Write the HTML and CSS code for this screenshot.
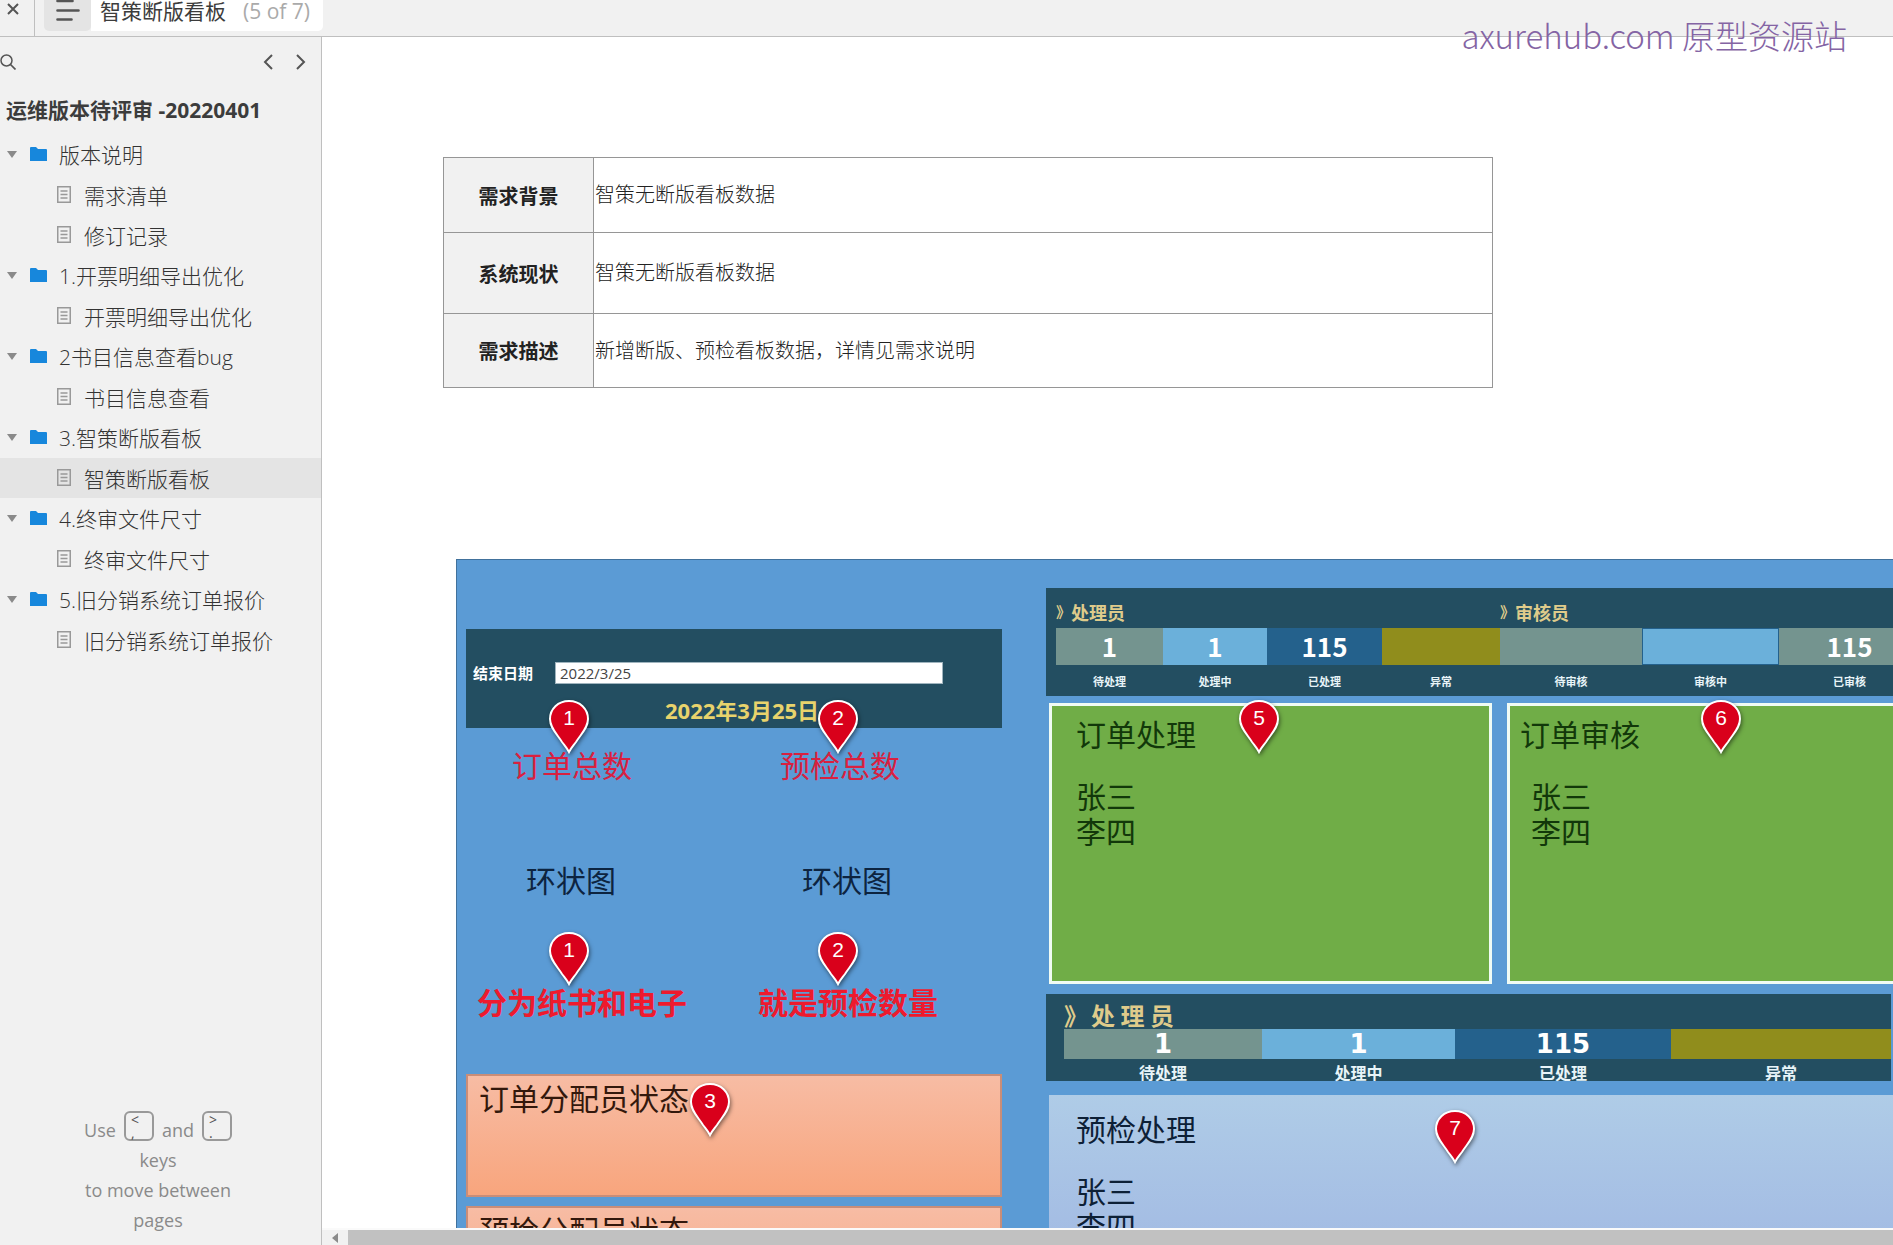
FILE: index.html
```html
<!DOCTYPE html>
<html lang="zh-CN">
<head>
<meta charset="utf-8">
<title>智策断版看板</title>
<link rel="stylesheet" href="styles.css">
</head>
<body>
<svg class="defs" aria-hidden="true">
  <symbol id="i-caret" viewBox="0 0 10 7"><path d="M0 0h10L5 7z" fill="#8a8a8a"/></symbol>
  <symbol id="i-folder" viewBox="0 0 17 14"><path d="M0 1q0-1 1-1h5l2 2h8q1 0 1 1v11H0z" fill="#1787dc"/></symbol>
  <symbol id="i-page" viewBox="0 0 14 17"><path d="M.75.75h12.5v15.5H.75z" fill="none" stroke="#999" stroke-width="1.5"/><path d="M3.5 5h7M3.5 8.500h7M3.500 12h7" stroke="#999" stroke-width="1.300"/></symbol>
  <symbol id="i-pin" viewBox="0 0 48 62"><path d="M24 5C13 5 5 13 5 23c0 9 7 15 12 23 3 4 5 6 7 10 2-4 4-6 7-10 5-8 12-14 12-23C43 13 35 5 24 5z" fill="#d9001b" stroke="#fff" stroke-width="2"/></symbol>
</svg>

<header class="topbar">
  <button class="close" aria-label="关闭"><svg width="12" height="12" viewBox="0 0 12 12"><path d="M1 1l10 10M11 1L1 11" stroke="#555" stroke-width="2"/></svg></button>
  <button class="menu" aria-label="页面列表"><svg width="24" height="22" viewBox="0 0 24 22"><path d="M1.500 1h15M1.500 10.500h21M1.500 19.500h14" stroke="#555" stroke-width="2.600" stroke-linecap="round"/></svg></button>
  <div class="tab"><span>智策断版看板</span><span class="count">(5 of 7)</span></div>
  <div class="watermark">axurehub.com 原型资源站</div>
</header>

<div class="workspace">
  <aside class="sidebar">
    <div class="tools">
      <button class="tool" aria-label="搜索"><svg width="16" height="16" viewBox="0 0 16 16"><circle cx="6.500" cy="6.500" r="5.500" fill="none" stroke="#555" stroke-width="1.500"/><path d="M10.500 10.500l5 5" stroke="#555" stroke-width="1.700"/></svg></button>
      <button class="tool prev" aria-label="上一页"><svg width="10" height="16" viewBox="0 0 10 16"><path d="M9 1L2 8l7 7" fill="none" stroke="#555" stroke-width="2"/></svg></button>
      <button class="tool" aria-label="下一页"><svg width="10" height="16" viewBox="0 0 10 16"><path d="M1 1l7 7-7 7" fill="none" stroke="#555" stroke-width="2"/></svg></button>
    </div>
    <h1 class="project">运维版本待评审 -20220401</h1>
    <nav class="tree">
      <button class="folder"><svg class="caret"><use href="#i-caret"/></svg><svg class="dir"><use href="#i-folder"/></svg>版本说明</button>
      <a class="page" href="#"><svg class="doc"><use href="#i-page"/></svg>需求清单</a>
      <a class="page" href="#"><svg class="doc"><use href="#i-page"/></svg>修订记录</a>
      <button class="folder"><svg class="caret"><use href="#i-caret"/></svg><svg class="dir"><use href="#i-folder"/></svg>1.开票明细导出优化</button>
      <a class="page" href="#"><svg class="doc"><use href="#i-page"/></svg>开票明细导出优化</a>
      <button class="folder"><svg class="caret"><use href="#i-caret"/></svg><svg class="dir"><use href="#i-folder"/></svg>2书目信息查看bug</button>
      <a class="page" href="#"><svg class="doc"><use href="#i-page"/></svg>书目信息查看</a>
      <button class="folder"><svg class="caret"><use href="#i-caret"/></svg><svg class="dir"><use href="#i-folder"/></svg>3.智策断版看板</button>
      <a class="page current" href="#"><svg class="doc"><use href="#i-page"/></svg>智策断版看板</a>
      <button class="folder"><svg class="caret"><use href="#i-caret"/></svg><svg class="dir"><use href="#i-folder"/></svg>4.终审文件尺寸</button>
      <a class="page" href="#"><svg class="doc"><use href="#i-page"/></svg>终审文件尺寸</a>
      <button class="folder"><svg class="caret"><use href="#i-caret"/></svg><svg class="dir"><use href="#i-folder"/></svg>5.旧分销系统订单报价</button>
      <a class="page" href="#"><svg class="doc"><use href="#i-page"/></svg>旧分销系统订单报价</a>
    </nav>
    <div class="hint">
      <div class="hint-keys"><span>Use</span><kbd>&lt;<br>,</kbd><span>and</span><kbd>&gt;<br>.</kbd></div>
      keys<br>to move between<br>pages
    </div>
  </aside>

  <main class="main">
    <div class="canvas">
      <table class="brief">
        <tr class="r1"><th scope="row">需求背景</th><td>智策无断版看板数据</td></tr>
        <tr class="r2"><th scope="row">系统现状</th><td>智策无断版看板数据</td></tr>
        <tr class="r3"><th scope="row">需求描述</th><td>新增断版、预检看板数据，详情见需求说明</td></tr>
      </table>

      <section class="board">
        <div class="left">
          <div class="date-panel">
            <div class="date-row"><label for="end">结束日期</label><input id="end" type="text" value="2022/3/25"></div>
            <div class="date-big">2022年3月25日</div>
          </div>
          <div class="stats totals"><span>订单总数</span><span>预检总数</span></div>
          <div class="stats rings"><span>环状图</span><span>环状图</span></div>
          <div class="stats notes"><span>分为纸书和电子</span><span>就是预检数量</span></div>
          <div class="status">订单分配员状态</div>
          <div class="status">预检分配员状态</div>
        </div>

        <div class="right">
          <div class="strip strip-a">
            <div class="role role-1"><i>》</i>处理员</div><div class="role role-2"><i>》</i>审核员</div>
            <b class="grey">1</b><b class="sky">1</b><b class="navy">115</b><b class="olive"></b><b class="grey"></b><b class="sky lined"></b><b class="grey">115</b>
            <span>待处理</span><span>处理中</span><span>已处理</span><span>异常</span><span>待审核</span><span>审核中</span><span>已审核</span>
          </div>
          <div class="cards">
            <div class="card"><h2>订单处理</h2><p>张三<br>李四</p></div>
            <div class="card review"><h2>订单审核</h2><p>张三<br>李四</p></div>
          </div>
          <div class="strip strip-b">
            <div class="role"><i>》</i>处 理 员</div>
            <b class="grey">1</b><b class="sky">1</b><b class="navy">115</b><b class="olive"></b>
            <span>待处理</span><span>处理中</span><span>已处理</span><span>异常</span>
          </div>
          <div class="card precheck"><h2>预检处理</h2><p>张三<br>李四</p></div>
        </div>

        <div class="pin p1"><svg><use href="#i-pin"/></svg><span>1</span></div>
        <div class="pin p2"><svg><use href="#i-pin"/></svg><span>2</span></div>
        <div class="pin p3"><svg><use href="#i-pin"/></svg><span>1</span></div>
        <div class="pin p4"><svg><use href="#i-pin"/></svg><span>2</span></div>
        <div class="pin p5"><svg><use href="#i-pin"/></svg><span>3</span></div>
        <div class="pin p6"><svg><use href="#i-pin"/></svg><span>5</span></div>
        <div class="pin p7"><svg><use href="#i-pin"/></svg><span>6</span></div>
        <div class="pin p8"><svg><use href="#i-pin"/></svg><span>7</span></div>
      </section>
    </div>
    <div class="hscroll"><svg width="6" height="10" viewBox="0 0 6 10"><path d="M6 0v10L0 5z" fill="#8a8a8a"/></svg><div class="thumb"></div></div>
  </main>
</div>
</body>
</html>
```
FILE: styles.css
```css
* { box-sizing: border-box; }

body {
  margin: 0;
  height: 100vh;
  display: flex;
  flex-direction: column;
  overflow: hidden;
  background: #fff;
  color: #3c3c3c;
  font-family: "Open Sans", "Noto Sans CJK SC", sans-serif;
  font-size: 21px;
}

button {
  border: 0;
  padding: 0;
  background: none;
  color: inherit;
  font: inherit;
}

.defs { position: absolute; width: 0; height: 0; }

/* top bar */
.topbar {
  position: relative;
  display: flex;
  flex: none;
  height: 37px;
  padding-bottom: 5px;
  background: #f1f1f1;
  border-bottom: 1px solid #bfbfbf;
}
.close {
  width: 35px;
  margin-bottom: -5px;
  padding: 3px 0 0 7px;
  border-right: 1px solid #bfbfbf;
  display: flex;
}
.menu {
  width: 47px;
  margin-left: 9px;
  padding-left: 12px;
  display: flex;
  background: #e4e4e4;
  border-radius: 0 0 5px 5px;
}
.tab {
  display: flex;
  gap: 17px;
  width: 232px;
  padding-left: 9px;
  background: #fff;
  border-radius: 0 0 5px 0;
  line-height: 22px;
  white-space: nowrap;
}
.count { color: #aaa; }
.watermark {
  position: absolute;
  top: 12px;
  right: 46px;
  color: #8464a4;
  font-family: "Noto Sans CJK SC", sans-serif;
  font-weight: 300;
  font-size: 33px;
  line-height: 46px;
  white-space: nowrap;
  z-index: 2;
}

/* sidebar */
.workspace { flex: 1; display: flex; min-height: 0; }
.sidebar {
  flex: none;
  width: 322px;
  display: flex;
  flex-direction: column;
  background: #f1f1f1;
  border-right: 1px solid #bfbfbf;
}
.tools {
  display: flex;
  align-items: center;
  height: 50px;
  padding: 0 15px 0 0;
  gap: 23px;
}
.tool { display: flex; }
.prev { margin-left: auto; }
.project {
  margin: 0;
  padding-left: 6px;
  font-size: 21px;
  font-weight: 700;
  line-height: 47px;
  white-space: nowrap;
}
.tree { display: flex; flex-direction: column; }
.folder, .page {
  display: flex;
  align-items: center;
  height: 41px;
  padding-bottom: 1px;
  color: #333;
  font-weight: 300;
  text-decoration: none;
  white-space: nowrap;
}
.folder { padding-left: 7px; }
.page { height: 40px; padding-left: 57px; }
.current { background: #e4e4e4; }
.caret { width: 10px; height: 7px; margin-right: 13px; }
.dir { width: 17px; height: 14px; margin-right: 12px; }
.doc { width: 14px; height: 17px; margin-right: 13px; }
.hint {
  margin-top: auto;
  padding: 0 5px 10px 0;
  color: #8a8a8a;
  font-size: 18px;
  line-height: 30px;
  text-align: center;
}
.hint-keys { display: flex; justify-content: center; gap: 8px; align-items: flex-end; }
kbd {
  width: 30px;
  height: 30px;
  margin-bottom: 4px;
  padding-left: 5px;
  border: 2px solid #999;
  border-radius: 6px;
  color: #555;
  font: 14px/13px "Open Sans", sans-serif;
  text-align: left;
}

/* canvas */
.main {
  flex: 1;
  min-width: 0;
  display: flex;
  flex-direction: column;
}
.canvas {
  flex: 1;
  min-height: 0;
  overflow: hidden;
  padding: 120px 0 0 121px;
  font-family: "Noto Sans CJK SC", sans-serif;
}
.brief {
  width: 1050px;
  border-collapse: collapse;
  color: #222;
  font-size: 20px;
  line-height: 30px;
}
.brief th, .brief td { border: 1px solid #969696; padding: 1px 1px 0; }
.brief th { width: 150px; background: #f1f1f1; font-weight: 700; }
.brief td { text-align: left; font-weight: 300; padding-bottom: 3px; }
.r1 { height: 75px; }
.r2 { height: 81px; }
.r3 { height: 74px; }

.board {
  position: relative;
  display: grid;
  grid-template-columns: 536px 1fr;
  column-gap: 44px;
  margin: 171px -68px 0 13px;
  padding-left: 9px;
  border: 1px solid #41719c;
  background: #5b9bd5;
  color: #0d2440;
  font-size: 30px;
  line-height: 36px;
}

/* left column */
.date-panel {
  height: 99px;
  margin-top: 69px;
  padding: 33px 59px 0 7px;
  background: #234e61;
}
.date-row { display: flex; align-items: center; height: 22px; }
.date-row label {
  width: 82px;
  color: #fff;
  font-size: 15px;
  font-weight: 700;
}
.date-row input {
  flex: 1;
  min-width: 0;
  height: 22px;
  padding: 0 4px;
  border: 1px solid #9fb4be;
  background: #fff;
  color: #444;
  font: 15px/20px "Open Sans", sans-serif;
}
.date-big {
  margin: 8px 0 0 192px;
  color: #e8d36c;
  font: 700 22px/36px "Open Sans", "Noto Sans CJK SC", sans-serif;
}
.stats { display: flex; }
.totals { margin-top: 18px; padding-left: 46px; gap: 148px; color: #d9203f; }
.rings { margin-top: 79px; padding-left: 60px; gap: 186px; }
.notes { margin-top: 86px; padding-left: 11px; gap: 71px; color: #ee1a2e; font-weight: 700; }
.status {
  height: 123px;
  margin-bottom: 9px;
  padding: 3px 11px;
  border: 2px solid #c98d78;
  background: linear-gradient(#f7bca4, #f8a57d);
  color: #33180c;
}
.notes + .status { margin-top: 55px; }

/* right column */
.strip { display: grid; background: #234e61; }
.strip b {
  display: flex;
  align-items: center;
  justify-content: center;
  color: #fff;
}
.strip span {
  color: #e8f4f8;
  font-weight: 700;
  text-align: center;
}
.grey { background: #74948f; }
.sky { background: #6bb0da; }
.navy { background: #24618c; }
.olive { background: #908d1c; }
.lined { border: 1px solid #24618c; }
.role { display: flex; color: #dfcb8b; font-weight: 700; white-space: nowrap; }
.role i { font-style: normal; }

.strip-a {
  margin: 28px 40px 0 0;
  padding-left: 10px;
  grid-template-columns: 107fr 104fr 115fr 118fr 142fr 137fr 141fr;
  grid-template-rows: 40px 37px 31px;
}
.strip-a .role { font-size: 18px; line-height: 48px; }
.strip-a i { font-size: 15px; }
.role-1 { grid-column: 1 / 5; }
.role-2 { grid-column: 5 / 8; }
.strip-a b { padding-bottom: 2px; font-size: 26px; }
.strip-a span { font-size: 11px; line-height: 32px; }

.cards {
  display: grid;
  grid-template-columns: 1fr 1fr;
  gap: 15px;
  margin: 7px 10px 0 3px;
}
.card {
  height: 281px;
  padding: 9px 24px;
  border: 3px solid #f0fbf4;
  background: #70ad47;
  color: #12380a;
}
.card h2 { margin: 0 0 27px; font-size: 30px; font-weight: 400; line-height: 36px; }
.card p { margin: 0; line-height: 35px; }
.review { padding-left: 10px; }
.review p { padding-left: 11px; }

.strip-b {
  margin: 10px 69px 0 0;
  padding-left: 18px;
  grid-template-columns: 198fr 193fr 216fr 220fr;
  grid-template-rows: 35px 30px 22px;
}
.strip-b .role { grid-column: 1 / 5; gap: 3px; font-size: 24px; line-height: 41px; }
.strip-b b { font: 700 26px/30px "DejaVu Sans", sans-serif; }
.strip-b span { padding-top: 4px; font-size: 16px; line-height: 18px; }

.precheck {
  height: 210px;
  margin: 14px 10px 0 3px;
  padding: 15px 27px;
  border: 0;
  background: linear-gradient(#afcce7, #a2bae3 160px);
  color: #0d2036;
}

/* numbered markers placed over the board */
.pin { position: absolute; width: 48px; height: 62px; }
.pin svg {
  display: block;
  width: 48px;
  height: 62px;
  filter: drop-shadow(1px 2px 2px rgba(0, 0, 0, .5));
}
.pin span {
  position: absolute;
  inset: 8px 0 auto;
  color: #fff;
  font: 21px/28px "Liberation Sans", sans-serif;
  text-align: center;
}
.p1, .p3 { left: 88px; }
.p2, .p4 { left: 357px; }
.p1, .p2, .p6, .p7 { top: 136px; }
.p3, .p4 { top: 368px; }
.p5 { left: 229px; top: 519px; }
.p6 { left: 778px; }
.p7 { left: 1240px; }
.p8 { left: 974px; top: 546px; }

/* horizontal scroll bar */
.hscroll {
  flex: none;
  display: flex;
  align-items: center;
  height: 17px;
  padding-left: 10px;
  border-top: 2px solid #fafafa;
  background: #f1f1f1;
}
.thumb { flex: 1; height: 15px; margin-left: 10px; background: #c1c1c1; }
```
